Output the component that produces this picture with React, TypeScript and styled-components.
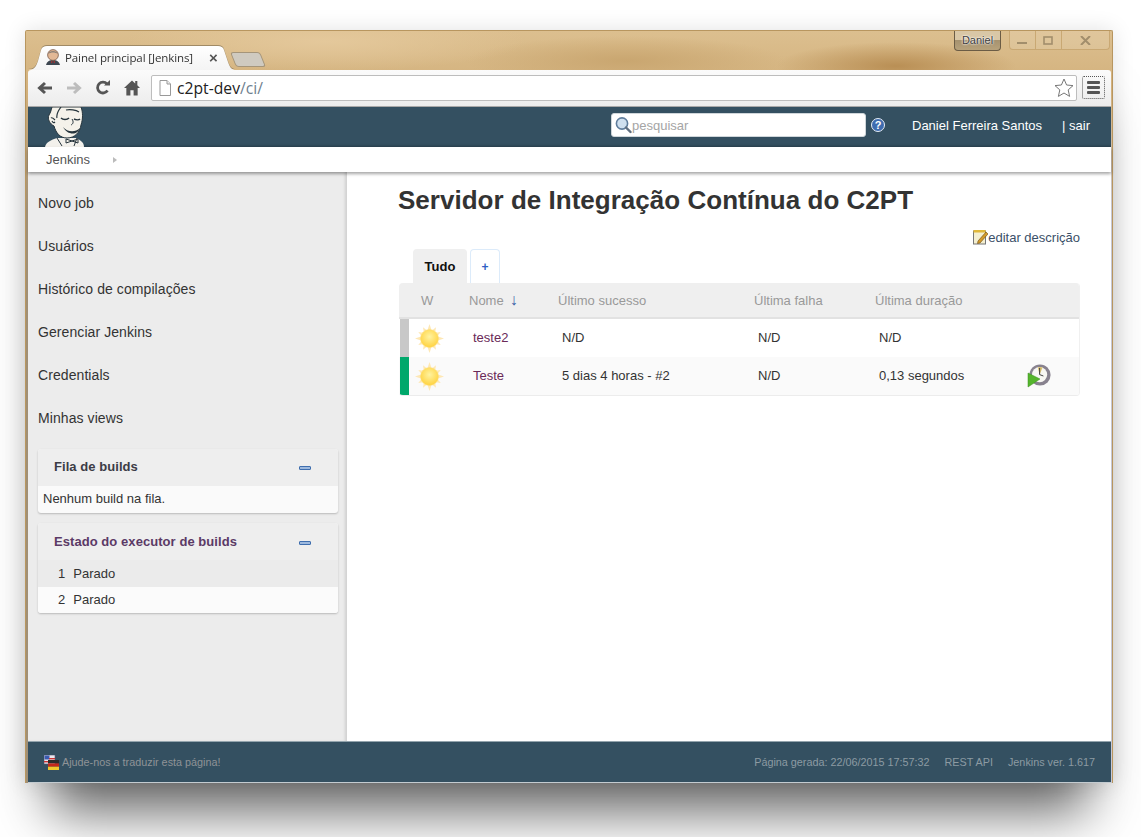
import React from "react";
import styled, { createGlobalStyle } from "styled-components";

const GlobalStyle = createGlobalStyle`
  html, body { margin: 0; padding: 0; background: #fff; }
  body { font-family: "Liberation Sans", Arial, sans-serif; overflow: hidden; }
  * { box-sizing: border-box; }
`;

const Desktop = styled.div`
  width: 1141px;
  height: 837px;
  padding: 30px 28px 0 25px;
  overflow: hidden;
`;

const BrowserWindow = styled.div`
  width: 1088px;
  height: 753px;
  display: flex;
  flex-direction: column;
  padding: 0 1px 0 2px;
  border: 1px solid #b8965f;
  border-bottom: 0;
  border-radius: 2px 2px 0 0;
  background:
    radial-gradient(ellipse 120px 24px at 870px 35px, #b98f55 0, rgba(185, 143, 85, 0) 100%),
    radial-gradient(ellipse 200px 30px at 300px 10px, #e4c89b 0, rgba(228, 200, 155, 0) 100%),
    radial-gradient(ellipse 160px 25px at 600px 30px, #c9a670 0, rgba(201, 166, 112, 0) 100%),
    linear-gradient(180deg, #dcbf8f 0, #d2b07b 60px, rgba(210, 176, 123, 0) 180px),
    linear-gradient(90deg, #a08f75 0, #a08f75 50%, #c6c8d6 50%, #c6c8d6 100%);
  box-shadow: 0 54px 50px -25px rgba(0, 0, 0, 0.6), 0 0 22px rgba(0, 0, 0, 0.12);
`;

const TabStrip = styled.div`
  height: 39px;
  flex: none;
  display: flex;
  align-items: flex-end;
  position: relative;
`;

const TabShape = styled.div`
  width: 208px;
  height: 24px;
  flex: none;
  filter: drop-shadow(0 -1px 0 #a08a66);
`;

const ActiveTab = styled.div`
  width: 208px;
  height: 24px;
  display: flex;
  align-items: center;
  padding: 0 0 2px 18px;
  background: linear-gradient(180deg, #ffffff, #f4f4f4);
  clip-path: path("M0 24 C6 24 8 21 10 15 L13 4 C14 1 16 0 19 0 L190 0 C193 0 195 1 196 4 L200 16 C202 22 204 24 208 24 Z");
`;

const TabTitle = styled.span`
  margin-left: 5px;
  font-family: "Open Sans", sans-serif;
  font-size: 11.5px;
  color: #333;
  white-space: nowrap;
  letter-spacing: -0.1px;
`;

const TabClose = styled.span`
  margin-left: 16px;
  font-size: 15px;
  font-weight: 700;
  color: #555;
`;

const NewTab = styled.div`
  width: 30px;
  height: 15px;
  margin: 0 0 3px -3px;
  flex: none;
  background: #cfcac0;
  border: 1px solid #a5957a;
  border-radius: 3px;
  transform: skewX(22deg);
`;

const WindowControls = styled.div`
  position: absolute;
  top: 0;
  right: 1px;
  display: flex;
  align-items: flex-start;
`;

const UserBadge = styled.div`
  width: 47px;
  height: 20px;
  margin-right: 8px;
  border: 1px solid #6b5c45;
  border-top: 0;
  border-radius: 0 0 4px 4px;
  background: linear-gradient(180deg, #d9c7a6 0, #d9c7a6 50%, #a6926f 50%, #b7a27c 100%);
  color: #3d3d3d;
  font-size: 11px;
  text-align: center;
  line-height: 19px;
  text-shadow: 0 0 2px #fff, 0 0 2px #fff;
`;

const ControlGroup = styled.div`
  height: 19px;
  display: flex;
  border: 1px solid #c9a873;
  border-top: 0;
  border-radius: 0 0 4px 4px;
  background: rgba(255, 255, 255, 0.12);
`;

const ControlButton = styled.div<{ $wide?: boolean }>`
  width: ${({ $wide }) => ($wide ? 47 : 26)}px;
  display: flex;
  align-items: center;
  justify-content: center;
  border-right: 1px solid #c9a873;
  color: #a28e6c;
  &:last-child { border-right: 0; }
`;

const Toolbar = styled.div`
  height: 37px;
  flex: none;
  display: flex;
  align-items: center;
  padding: 0 6px 1px 9px;
  background: linear-gradient(180deg, #fbfbfb, #ececec);
  border-bottom: 1px solid #a8a8a8;
  border-radius: 3px 3px 0 0;
`;

const NavIcons = styled.div`
  display: flex;
  align-items: center;
  gap: 13px;
  width: 114px;
  flex: none;
`;

const AddressBar = styled.div`
  width: 926px;
  height: 26px;
  flex: none;
  display: flex;
  align-items: center;
  padding: 0 2px 0 6px;
  background: #fff;
  border: 1px solid #bdbdbd;
  border-radius: 2px;
`;

const UrlText = styled.span`
  margin-left: 5px;
  flex: 1;
  font-family: "Open Sans", sans-serif;
  font-size: 15.7px;
  color: #222;
`;

const UrlPath = styled.span`
  color: #6f7f8f;
`;

const MenuButton = styled.div`
  width: 23px;
  height: 23px;
  margin-left: 5px;
  flex: none;
  display: flex;
  flex-direction: column;
  justify-content: center;
  gap: 2px;
  padding: 0 4px;
  border: 1px dotted #555;
  border-radius: 2px;
`;

const MenuBar = styled.div`
  height: 3px;
  background: #555;
  border-radius: 1px;
`;

const Header = styled.header`
  height: 40px;
  flex: none;
  display: flex;
  align-items: center;
  padding: 0 21px 4px 16px;
  background: #345061;
  box-shadow: inset 0 -3px 3px -2px rgba(0, 0, 0, 0.25);
  overflow: hidden;
`;

const LogoSlot = styled.div`
  width: 42px;
  height: 40px;
  margin-top: 4px;
  flex: none;
`;

const SearchBox = styled.div`
  width: 255px;
  height: 24px;
  margin-left: auto;
  display: flex;
  align-items: center;
  padding-left: 2px;
  background: #fff;
  border: 1px solid #cfd6da;
  border-radius: 3px;
  color: #a5a5a5;
  font-size: 13px;
`;

const HelpIcon = styled.span`
  width: 14px;
  height: 14px;
  margin-left: 5px;
  flex: none;
  display: flex;
  align-items: center;
  justify-content: center;
  border-radius: 50%;
  background: #3e6cb0;
  border: 1px solid #e6edf6;
  color: #fff;
  font-size: 11px;
  font-weight: 700;
`;

const UserName = styled.span`
  margin-left: 27px;
  font-size: 13px;
  color: #fff;
  white-space: nowrap;
`;

const Logout = styled.span`
  margin-left: 20px;
  font-size: 13px;
  color: #fff;
`;

const Breadcrumbs = styled.nav`
  height: 25px;
  flex: none;
  display: flex;
  align-items: center;
  padding-left: 18px;
  background: #fff;
  font-size: 13px;
  color: #555;
  box-shadow: 0 2px 3px rgba(0, 0, 0, 0.35);
  position: relative;
  z-index: 1;
`;

const CrumbArrow = styled.span`
  margin-left: 23px;
  width: 0;
  height: 0;
  border-left: 4px solid #bbb;
  border-top: 3px solid transparent;
  border-bottom: 3px solid transparent;
`;

const Body = styled.div`
  flex: 1;
  min-height: 0;
  display: flex;
  background: #fff;
`;

const Sidebar = styled.aside`
  width: 319px;
  flex: none;
  padding: 9px 10px 0;
  background: #ececec;
  box-shadow: inset -3px 0 3px -1px rgba(0, 0, 0, 0.12);
`;

const SideLink = styled.div`
  height: 43px;
  display: flex;
  align-items: center;
  font-size: 14px;
  letter-spacing: 0.08px;
  color: #333;
`;

const Panel = styled.section`
  width: 300px;
  margin-bottom: 10px;
  border-radius: 3px;
  background: #fafafa;
  box-shadow: 0 1px 2px rgba(0, 0, 0, 0.22);
  overflow: hidden;
`;

const PanelFirst = styled(Panel)`
  margin-top: 10px;
`;

const PanelHead = styled.div<{ $visited?: boolean }>`
  height: 37px;
  display: flex;
  align-items: center;
  justify-content: space-between;
  padding: 0 27px ${({ $visited }) => ($visited ? 1 : 3)}px 16px;
  background: #eeeeee;
  font-size: 13px;
  letter-spacing: 0.06px;
  font-weight: 700;
  color: ${({ $visited }) => ($visited ? "#5b3a66" : "#3c3c46")};
`;

const Collapse = styled.span`
  width: 12px;
  height: 4px;
  margin-top: 4px;
  background: #9db9de;
  border: 1px solid #3f6eae;
  border-radius: 1px;
`;

const EmptyQueue = styled.div`
  height: 27px;
  padding: 5px 5px 0;
  font-size: 13px;
  color: #333;
`;

const ExecutorRow = styled.div<{ $shaded?: boolean }>`
  height: ${({ $shaded }) => ($shaded ? 27 : 26)}px;
  display: flex;
  align-items: center;
  gap: 8px;
  padding: 0 0 ${({ $shaded }) => ($shaded ? 0 : 2)}px 20px;
  background: ${({ $shaded }) => ($shaded ? "#ebebeb" : "#fbfbfb")};
  font-size: 13px;
  color: #333;
`;

const Main = styled.main`
  flex: 1;
  min-width: 0;
  padding: 13px 31px 0 51px;
`;

const Title = styled.h1`
  margin: 0;
  font-size: 26px;
  line-height: 30px;
  font-weight: 700;
  color: #333;
  letter-spacing: 0.02px;
  white-space: nowrap;
`;

const EditRow = styled.div`
  height: 20px;
  margin-top: 12px;
  display: flex;
  align-items: center;
  justify-content: flex-end;
  font-size: 13px;
  color: #3b5068;
`;

const Tabs = styled.div`
  height: 34px;
  margin-top: 2px;
  display: flex;
  gap: 3px;
  padding-left: 15px;
`;

const ViewTab = styled.div<{ $active?: boolean }>`
  width: ${({ $active }) => ($active ? 54 : 30)}px;
  display: flex;
  align-items: center;
  justify-content: center;
  border-radius: 4px 4px 0 0;
  font-size: ${({ $active }) => ($active ? 13 : 12)}px;
  font-weight: 700;
  color: ${({ $active }) => ($active ? "#111" : "#2f5fc4")};
  background: ${({ $active }) => ($active ? "#efefef" : "#fff")};
  border: ${({ $active }) => ($active ? "0" : "1px solid #dcebfa")};
  border-bottom: 0;
`;

const JobGrid = styled.div`
  width: 681px;
  margin-left: 1px;
  border-radius: 4px;
  border-bottom: 1px solid #ececec;
  border-right: 1px solid #f0f0f0;
  overflow: hidden;
`;

const Row = styled.div`
  display: grid;
  grid-template-columns: 10px 56px 89px 196px 121px 150px 1fr;
  align-items: center;
`;

const HeadRow = styled(Row)`
  height: 36px;
  background: #efefef;
  border-bottom: 2px solid #e2e2e2;
  font-size: 13px;
  color: #999;
`;

const JobRow = styled(Row)<{ $shaded?: boolean }>`
  height: 38px;
  background: ${({ $shaded }) => ($shaded ? "#fafafa" : "#fff")};
  font-size: 13px;
  color: #333;
`;

const HeadCell = styled.div`
  padding-left: 4px;
  white-space: nowrap;
`;

const WeatherHead = styled(HeadCell)`
  padding-left: 12px;
`;

const SortArrow = styled.span`
  margin-left: 6px;
  color: #3a5fa8;
  font-size: 16px;
  font-weight: 400;
`;

const StatusBar = styled.div<{ $color: string }>`
  height: 100%;
  margin-left: 1px;
  background: ${({ $color }) => $color};
`;

const WeatherCell = styled.div`
  display: flex;
  align-items: center;
  padding-left: 6px;
`;

const Cell = styled.div`
  padding: 0 0 2px 8px;
  white-space: nowrap;
`;

const JobLink = styled(Cell)`
  color: #6a2a58;
`;

const ActionCell = styled.div`
  display: flex;
  align-items: center;
  padding-left: 6px;
`;

const Footer = styled.footer`
  height: 42px;
  flex: none;
  display: flex;
  align-items: center;
  padding: 0 16px 0 16px;
  background: #345061;
  border-top: 1px solid #93a4ad;
  border-bottom: 1px solid #c3cbd0;
  font-size: 10.8px;
  color: #8c9ba3;
`;

const FooterHelp = styled.span`
  margin-left: 3px;
  color: #8f9397;
`;

const FooterInfo = styled.div`
  margin-left: auto;
  display: flex;
  gap: 15px;
`;

const Flags = () => (
  <svg width="15" height="15" viewBox="0 0 15 15">
    <rect x="0" y="0" width="11" height="9" fill="#e8e8ee" stroke="#557" strokeWidth=".6" />
    <rect x="0.5" y="0.5" width="5" height="4" fill="#3b5ab0" />
    <rect x="5" y="3" width="6" height="1.4" fill="#c33" />
    <rect x="0" y="6" width="5" height="1.4" fill="#c33" />
    <rect x="4" y="5" width="11" height="3.4" fill="#2b2b2b" />
    <rect x="4" y="8.4" width="11" height="3.3" fill="#c4271b" />
    <rect x="4" y="11.7" width="11" height="3.3" fill="#f0c92c" />
  </svg>
);

const Sun = () => (
  <svg width="29" height="29" viewBox="0 0 29 29">
    <defs>
      <radialGradient id="sunCore" cx="50%" cy="40%" r="60%">
        <stop offset="0" stopColor="#fff3a0" />
        <stop offset="1" stopColor="#ffd23f" />
      </radialGradient>
    </defs>
    {[0, 30, 60, 90, 120, 150, 180, 210, 240, 270, 300, 330].map((a) => (
      <polygon
        key={a}
        points={a % 90 === 0 ? "12.5,6 16.5,6 14.5,0" : "12.8,6 16.2,6 14.5,1.5"}
        fill="#fee8b4"
        transform={`rotate(${a} 14.5 14.5)`}
      />
    ))}
    <circle cx="14.5" cy="14.5" r="9" fill="url(#sunCore)" stroke="#fedd72" strokeWidth=".5" />
  </svg>
);

const ClockBuild = () => (
  <svg width="24" height="24" viewBox="0 0 24 24">
    <circle cx="13" cy="11" r="10.6" fill="#88828f" />
    <circle cx="12.6" cy="10.6" r="7.6" fill="#f8f7f3" />
    <path d="M12.6 10.6 L10.8 3.4 A7.6 7.6 0 0 1 15.6 3.6 Z" fill="#d9c06e" />
    <path d="M12.6 4 V10.6 L16.4 12" fill="none" stroke="#444" strokeWidth="1" />
    <polygon points="1,9 1,23 13,15" fill="#55b52c" stroke="#3a8f1c" strokeWidth=".5" />
  </svg>
);

const NotePad = () => (
  <svg width="15" height="16" viewBox="0 0 15 16">
    <rect x="0.5" y="2" width="12" height="13" fill="#f4efd0" stroke="#777" />
    <rect x="0.5" y="1" width="12" height="2.5" fill="#e0b83a" />
    <path d="M5 12 L13 3 L15 5 L7 14 L4.5 14.5 Z" fill="#d39a2a" stroke="#6b4a10" strokeWidth=".6" />
  </svg>
);

const SearchIcon = () => (
  <svg width="18" height="18" viewBox="0 0 18 18">
    <circle cx="8" cy="7.5" r="5.6" fill="#cfe0ef" stroke="#5f7d9c" strokeWidth="1.6" />
    <path d="M12 11.5 L16.5 16" stroke="#5f6f80" strokeWidth="2.4" strokeLinecap="round" />
  </svg>
);

const JenkinsLogo = () => (
  <svg width="42" height="40" viewBox="0 0 42 40">
    <path d="M1 40 C2 35 7 33 13 31 L32 31 C36 33 40 35 40 40 Z" fill="#f3f1ec" />
    <path d="M8 0 L37 0 C39 5 39 12 37 18 C36 25 31 31 23 31 C16 31 12 26 10 19 C6 17 3 12 5 8 C7 5 7 3 8 0 Z" fill="#f5f2ea" stroke="#26343c" strokeWidth="1" />
    <path d="M17 0 C14 4 12 7 13 11 M11 13 C9 11 8 10 7 11 M8 14 C9 16 10 16 11 15 M22 3 C26 2 32 3 35 5" fill="none" stroke="#26343c" strokeWidth="1.2" />
    <path d="M17 11 C19 13 23 13 25 11 M30 12 C32 13 35 13 36 12" fill="none" stroke="#26343c" strokeWidth="1.5" />
    <path d="M28 12 C30 15 29 17 27 18" fill="none" stroke="#26343c" strokeWidth="1" />
    <path d="M19 20 C23 25 31 26 36 21 C34 28 24 29 19 20 Z" fill="#26343c" />
    <path d="M22 36 L28 34 L34 36 L34 32 L28 34 L22 32 Z" fill="#f5f2ea" stroke="#26343c" strokeWidth="1" />
    <path d="M13 31 L18 39 M33 31 L30 39" stroke="#26343c" strokeWidth="1" />
  </svg>
);

const Favicon = () => (
  <svg width="14" height="16" viewBox="0 0 14 16">
    <path d="M0 16 C1 12 4 11 7 11 C10 11 13 12 14 16 Z" fill="#3d4650" />
    <circle cx="7" cy="6" r="5.4" fill="#e2b896" stroke="#6b4a3a" strokeWidth=".7" />
    <path d="M2 5 C3 1 11 1 12 5 C9 3 5 3 2 5 Z" fill="#8a8078" />
    <path d="M5 12 L7 13 L9 12 L9 14 L7 13 L5 14 Z" fill="#b32b2b" />
  </svg>
);

const NavArrow = ({ flip, color }: { flip?: boolean; color: string }) => (
  <svg width="16" height="14" viewBox="0 0 16 14" style={flip ? { transform: "scaleX(-1)" } : undefined}>
    <path d="M15 7 H4 M8 2 L2.5 7 L8 12" fill="none" stroke={color} strokeWidth="3" />
  </svg>
);

const ReloadIcon = () => (
  <svg width="16" height="15" viewBox="0 0 15 15">
    <path d="M12 10.5 A5.4 5.4 0 1 1 11.5 4" fill="none" stroke="#555" strokeWidth="2.8" />
    <polygon points="8.5,5.5 14.5,5.5 14.5,0" fill="#555" />
  </svg>
);

const HomeIcon = () => (
  <svg width="16" height="16" viewBox="0 0 15 15">
    <path d="M7.5 0.5 L10.5 3.2 L10.5 1 L12.5 1 L12.5 5 L15 7.5 L12.8 7.5 L12.8 14.5 L9 14.5 L9 9.5 L6 9.5 L6 14.5 L2.2 14.5 L2.2 7.5 L0 7.5 Z" fill="#555" />
  </svg>
);

const PageIcon = () => (
  <svg width="14" height="16" viewBox="0 0 14 16">
    <path d="M2 .5 H9 L12.5 4 V15.5 H2 Z" fill="#fff" stroke="#999" />
    <path d="M9 .5 V4 H12.5" fill="#eee" stroke="#999" />
  </svg>
);

const StarIcon = () => (
  <svg width="20" height="20" viewBox="0 0 20 20">
    <path d="M10 1 L12.6 7 L19 7.6 L14.2 11.9 L15.6 18.4 L10 15 L4.4 18.4 L5.8 11.9 L1 7.6 L7.4 7 Z" fill="#fff" stroke="#777" />
  </svg>
);

const sideLinks = ["Novo job", "Usuários", "Histórico de compilações", "Gerenciar Jenkins", "Credentials", "Minhas views"];

const jobs = [
  { name: "teste2", color: "#c8c8c8", success: "N/D", duration: "N/D", canBuild: false },
  { name: "Teste", color: "#00a86b", success: "5 dias 4 horas - #2", duration: "0,13 segundos", canBuild: true },
];

export default function App() {
  return (
    <Desktop>
      <GlobalStyle />
      <BrowserWindow>
        <TabStrip>
          <TabShape>
            <ActiveTab>
              <Favicon />
              <TabTitle>Painel principal [Jenkins]</TabTitle>
              <TabClose>×</TabClose>
            </ActiveTab>
          </TabShape>
          <NewTab />
          <WindowControls>
            <UserBadge>Daniel</UserBadge>
            <ControlGroup>
              <ControlButton>
                <svg width="11" height="9" viewBox="0 0 11 9"><rect x="0" y="6" width="10" height="2" fill="currentColor" /></svg>
              </ControlButton>
              <ControlButton>
                <svg width="11" height="9" viewBox="0 0 11 9"><rect x="1" y="1" width="8" height="7" fill="none" stroke="currentColor" strokeWidth="1.6" /></svg>
              </ControlButton>
              <ControlButton $wide>
                <svg width="11" height="9" viewBox="0 0 11 9"><path d="M1 0 L10 9 M10 0 L1 9" stroke="currentColor" strokeWidth="2" /></svg>
              </ControlButton>
            </ControlGroup>
          </WindowControls>
        </TabStrip>
        <Toolbar>
          <NavIcons>
            <NavArrow color="#555" />
            <NavArrow color="#bdbdbd" flip />
            <ReloadIcon />
            <HomeIcon />
          </NavIcons>
          <AddressBar>
            <PageIcon />
            <UrlText>c2pt-dev<UrlPath>/ci/</UrlPath></UrlText>
            <StarIcon />
          </AddressBar>
          <MenuButton>
            <MenuBar />
            <MenuBar />
            <MenuBar />
          </MenuButton>
        </Toolbar>
        <Header>
          <LogoSlot><JenkinsLogo /></LogoSlot>
          <SearchBox><SearchIcon />pesquisar</SearchBox>
          <HelpIcon>?</HelpIcon>
          <UserName>Daniel Ferreira Santos</UserName>
          <Logout>| sair</Logout>
        </Header>
        <Breadcrumbs>
          Jenkins
          <CrumbArrow />
        </Breadcrumbs>
        <Body>
          <Sidebar>
            {sideLinks.map((l) => <SideLink key={l}>{l}</SideLink>)}
            <PanelFirst>
              <PanelHead>Fila de builds<Collapse /></PanelHead>
              <EmptyQueue>Nenhum build na fila.</EmptyQueue>
            </PanelFirst>
            <Panel>
              <PanelHead $visited>Estado do executor de builds<Collapse /></PanelHead>
              <ExecutorRow $shaded><span>1</span><span>Parado</span></ExecutorRow>
              <ExecutorRow><span>2</span><span>Parado</span></ExecutorRow>
            </Panel>
          </Sidebar>
          <Main>
            <Title>Servidor de Integração Contínua do C2PT</Title>
            <EditRow><NotePad />editar descrição</EditRow>
            <Tabs>
              <ViewTab $active>Tudo</ViewTab>
              <ViewTab>+</ViewTab>
            </Tabs>
            <JobGrid>
              <HeadRow>
                <span />
                <WeatherHead>W</WeatherHead>
                <HeadCell>Nome<SortArrow>↓</SortArrow></HeadCell>
                <HeadCell>Último sucesso</HeadCell>
                <HeadCell>Última falha</HeadCell>
                <HeadCell>Última duração</HeadCell>
                <span />
              </HeadRow>
              {jobs.map((job, i) => (
                <JobRow key={job.name} $shaded={i === 1}>
                  <StatusBar $color={job.color} />
                  <WeatherCell><Sun /></WeatherCell>
                  <JobLink>{job.name}</JobLink>
                  <Cell>{job.success}</Cell>
                  <Cell>N/D</Cell>
                  <Cell>{job.duration}</Cell>
                  <ActionCell>{job.canBuild && <ClockBuild />}</ActionCell>
                </JobRow>
              ))}
            </JobGrid>
          </Main>
        </Body>
        <Footer>
          <Flags />
          <FooterHelp>Ajude-nos a traduzir esta página!</FooterHelp>
          <FooterInfo>
            <span>Página gerada: 22/06/2015 17:57:32</span>
            <span>REST API</span>
            <span>Jenkins ver. 1.617</span>
          </FooterInfo>
        </Footer>
      </BrowserWindow>
    </Desktop>
  );
}
